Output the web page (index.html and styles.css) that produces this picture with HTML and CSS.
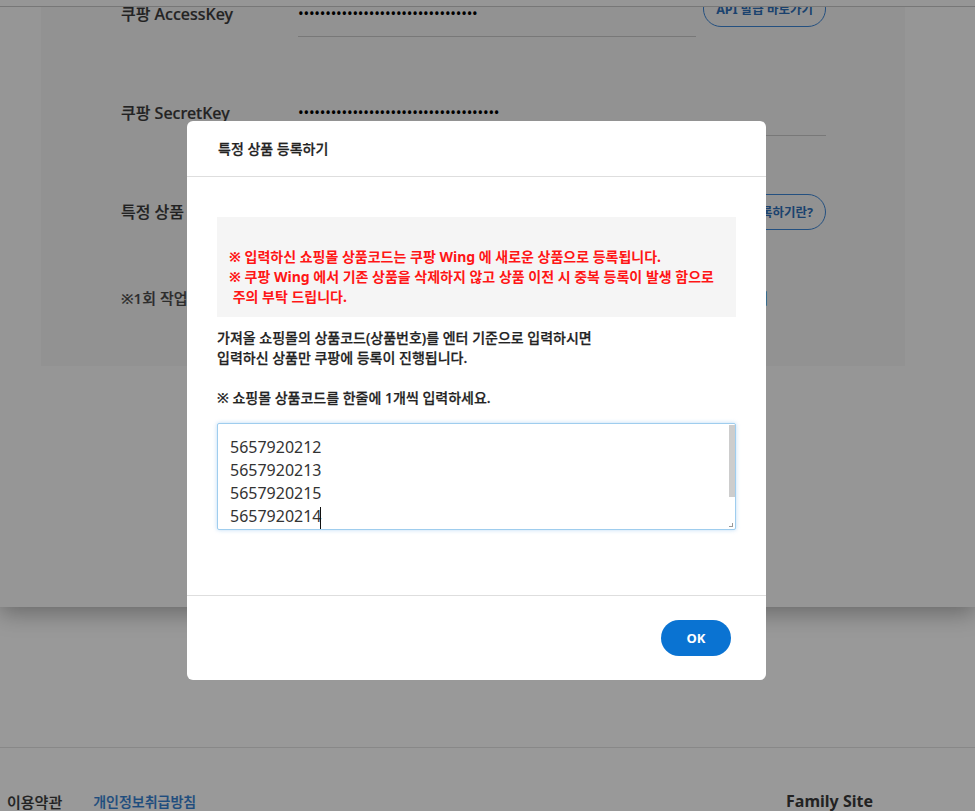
FILE: index.html
```html
<!DOCTYPE html>
<html lang="ko">
<head>
<meta charset="utf-8">
<title>특정 상품 등록하기</title>
<link rel="stylesheet" href="styles.css">
</head>
<body>
<header class="topbar"></header>
<div class="page">
  <main class="main">
    <section class="panel">
      <div class="row row-first">
        <span class="label">쿠팡 AccessKey</span>
        <div class="field"><span class="dots">•••••••••••••••••••••••••••••••••</span></div>
        <a class="pill pill-top">API 발급 바로가기</a>
      </div>
      <div class="row">
        <span class="label">쿠팡 SecretKey</span>
        <div class="field"><span class="dots">•••••••••••••••••••••••••••••••••••••</span></div>
      </div>
      <div class="row">
        <span class="label">특정 상품 등록</span>
        <div class="spacer"></div>
        <a class="pill">특정 상품 등록하기란?</a>
      </div>
      <div class="row row-note">
        <span class="note">※1회 작업 수량</span>
        <a class="note-link">안내</a>
      </div>
    </section>
  </main>
  <footer class="footer">
    <div class="footer-top"></div>
    <div class="footer-bottom">
      <nav class="footer-links">
        <a class="terms">이용약관</a>
        <a class="privacy">개인정보취급방침</a>
      </nav>
      <span class="family">Family Site</span>
    </div>
  </footer>
</div>

<div class="overlay"></div>

<div class="modal" role="dialog" aria-labelledby="modal-title">
  <div class="modal-header">
    <h2 id="modal-title" class="modal-title">특정 상품 등록하기</h2>
  </div>
  <div class="modal-body">
    <div class="warn">
      <br>
      ※ 입력하신 쇼핑몰 상품코드는 쿠팡 Wing 에 새로운 상품으로 등록됩니다.<br>
      ※ 쿠팡 Wing 에서 기존 상품을 삭제하지 않고 상품 이전 시 중복 등록이 발생 함으로<br>
      &nbsp;주의 부탁 드립니다.
    </div>
    <p class="guide">가져올 쇼핑몰의 상품코드(상품번호)를 엔터 기준으로 입력하시면<br>입력하신 상품만 쿠팡에 등록이 진행됩니다.<br><br>※ 쇼핑몰 상품코드를 한줄에 1개씩 입력하세요.</p>
    <div class="codes-wrap">
      <textarea class="codes" spellcheck="false">
5657920212
5657920213
5657920215
5657920214

</textarea>
      <span class="caret"></span>
      <span class="scroll-thumb"></span>
      <span class="grip"></span>
    </div>
  </div>
  <div class="modal-footer">
    <button class="ok-btn" type="button">OK</button>
  </div>
</div>
</body>
</html>
```

FILE: styles.css
```css
* { box-sizing: border-box; }

html, body {
  margin: 0;
  padding: 0;
}

body {
  font-family: "Noto Sans", "Noto Sans CJK KR", sans-serif;
  background: #fbfbfb;
  color: #333;
  overflow: hidden;
  height: 811px;
}

a { text-decoration: none; }

.topbar {
  position: fixed;
  top: 0;
  left: 0;
  right: 0;
  height: 7px;
  background: #fbfbfb;
  border-bottom: 1px solid #c6c6c6;
  z-index: 2;
}

.page {
  display: flex;
  flex-direction: column;
}

.main {
  height: 607px;
  background: #fbfbfb;
  position: relative;
  z-index: 1;
  box-shadow: 0 6px 22px rgba(0, 0, 0, 0.32);
}

.panel {
  margin: 0 70px 0 41px;
  height: 366px;
  background: #f3f3f3;
  padding: 0 79px 0 80px;
  display: flex;
  flex-direction: column;
  gap: 52px;
}

.row {
  display: flex;
  align-items: center;
  height: 47px;
}

.row-first { margin-top: -10px; }

.label {
  flex: none;
  width: 177px;
  font-size: 16px;
  font-weight: 500;
  color: #3a3a3a;
  line-height: 22px;
  -webkit-text-stroke: 0.2px #3a3a3a;
}

.field {
  flex: 1;
  height: 47px;
  display: flex;
  align-items: center;
  border-bottom: 1px solid #c9c9c9;
}

.dots {
  font-family: "Noto Sans", sans-serif;
  font-size: 15px;
  line-height: 20px;
  color: #000;
  letter-spacing: -0.2px;
}

.spacer { flex: 1; }

.pill {
  flex: none;
  margin-left: 7px;
  height: 36px;
  padding: 0 12px;
  border: 1px solid #3d86d6;
  border-radius: 18px;
  display: flex;
  align-items: center;
  font-size: 12.5px;
  font-weight: 700;
  color: #2e6fb8;
  white-space: nowrap;
}

.pill-top {
  align-self: flex-start;
  height: 37px;
}

.row-note {
  height: 22px;
  justify-content: space-between;
}

.note {
  font-size: 15px;
  font-weight: 500;
  color: #4a4a4a;
  line-height: 22px;
  -webkit-text-stroke: 0.2px #4a4a4a;
}

.note-link {
  font-size: 15px;
  color: #3d86d6;
  line-height: 22px;
  margin-right: 58px;
}

.footer {
  background: #fff;
  height: 204px;
}

.footer-top {
  height: 141px;
  border-bottom: 1px solid #e3e3e3;
}

.footer-bottom {
  display: flex;
  justify-content: space-between;
  align-items: center;
  padding: 0 102px 0 7px;
  margin-top: 43px;
  height: 20px;
}

.footer-links {
  display: flex;
  gap: 31px;
  align-items: center;
}

.terms {
  font-size: 15px;
  font-weight: 500;
  color: #3a3a3a;
  -webkit-text-stroke: 0.2px #3a3a3a;
}

.privacy {
  font-size: 14px;
  font-weight: 500;
  color: #3380d2;
  -webkit-text-stroke: 0.2px #3380d2;
}

.family {
  font-size: 16px;
  font-weight: 700;
  color: #3a3a3a;
}

.overlay {
  position: fixed;
  inset: 0;
  background: rgba(0, 0, 0, 0.4);
  z-index: 10;
}

.modal {
  position: fixed;
  left: 187px;
  top: 121px;
  width: 579px;
  background: #fff;
  border-radius: 6px;
  z-index: 11;
  display: flex;
  flex-direction: column;
}

.modal-header {
  height: 56px;
  padding: 0 31px;
  display: flex;
  align-items: center;
  border-bottom: 1px solid #dedede;
}

.modal-title {
  margin: 0;
  font-size: 14px;
  font-weight: 500;
  color: #222;
  line-height: 20px;
  -webkit-text-stroke: 0.25px #222;
}

.modal-body {
  padding: 40px 30px 65px;
}

.warn {
  background: #f5f5f5;
  padding: 10px 12px;
  font-size: 14px;
  font-weight: 700;
  line-height: 20px;
  color: #ff1616;
}

.guide {
  margin: 11px 0 15px;
  font-size: 14px;
  font-weight: 500;
  line-height: 20px;
  color: #222;
  -webkit-text-stroke: 0.25px #222;
}

.codes-wrap {
  position: relative;
  width: 519px;
  height: 107px;
}

.codes {
  display: block;
  width: 100%;
  height: 100%;
  margin: 0;
  padding: 12px 12px;
  resize: none;
  font-family: "Noto Sans", "Noto Sans CJK KR", sans-serif;
  font-size: 16px;
  line-height: 23px;
  color: #333;
  border: 1px solid #9fcdee;
  border-radius: 2px;
  box-shadow: 0 0 4px rgba(90, 165, 230, 0.4);
  outline: none;
  overflow: hidden;
}

.caret {
  position: absolute;
  left: 103px;
  top: 84px;
  width: 1px;
  height: 22px;
  background: #111;
}

.scroll-thumb {
  position: absolute;
  right: 1px;
  top: 2px;
  width: 6px;
  height: 72px;
  background: #cdcdcd;
}

.grip {
  position: absolute;
  right: 3px;
  bottom: 3px;
  width: 4px;
  height: 4px;
  border-right: 1px solid #999;
  border-bottom: 1px solid #999;
}

.modal-footer {
  border-top: 1px solid #dedede;
  padding: 24px 35px 24px;
  display: flex;
  justify-content: flex-end;
}

.ok-btn {
  width: 70px;
  height: 36px;
  border: none;
  border-radius: 18px;
  background: #0a73d2;
  color: #fff;
  font-family: "Noto Sans", "Noto Sans CJK KR", sans-serif;
  font-size: 13px;
  font-weight: 700;
  cursor: pointer;
}
```
